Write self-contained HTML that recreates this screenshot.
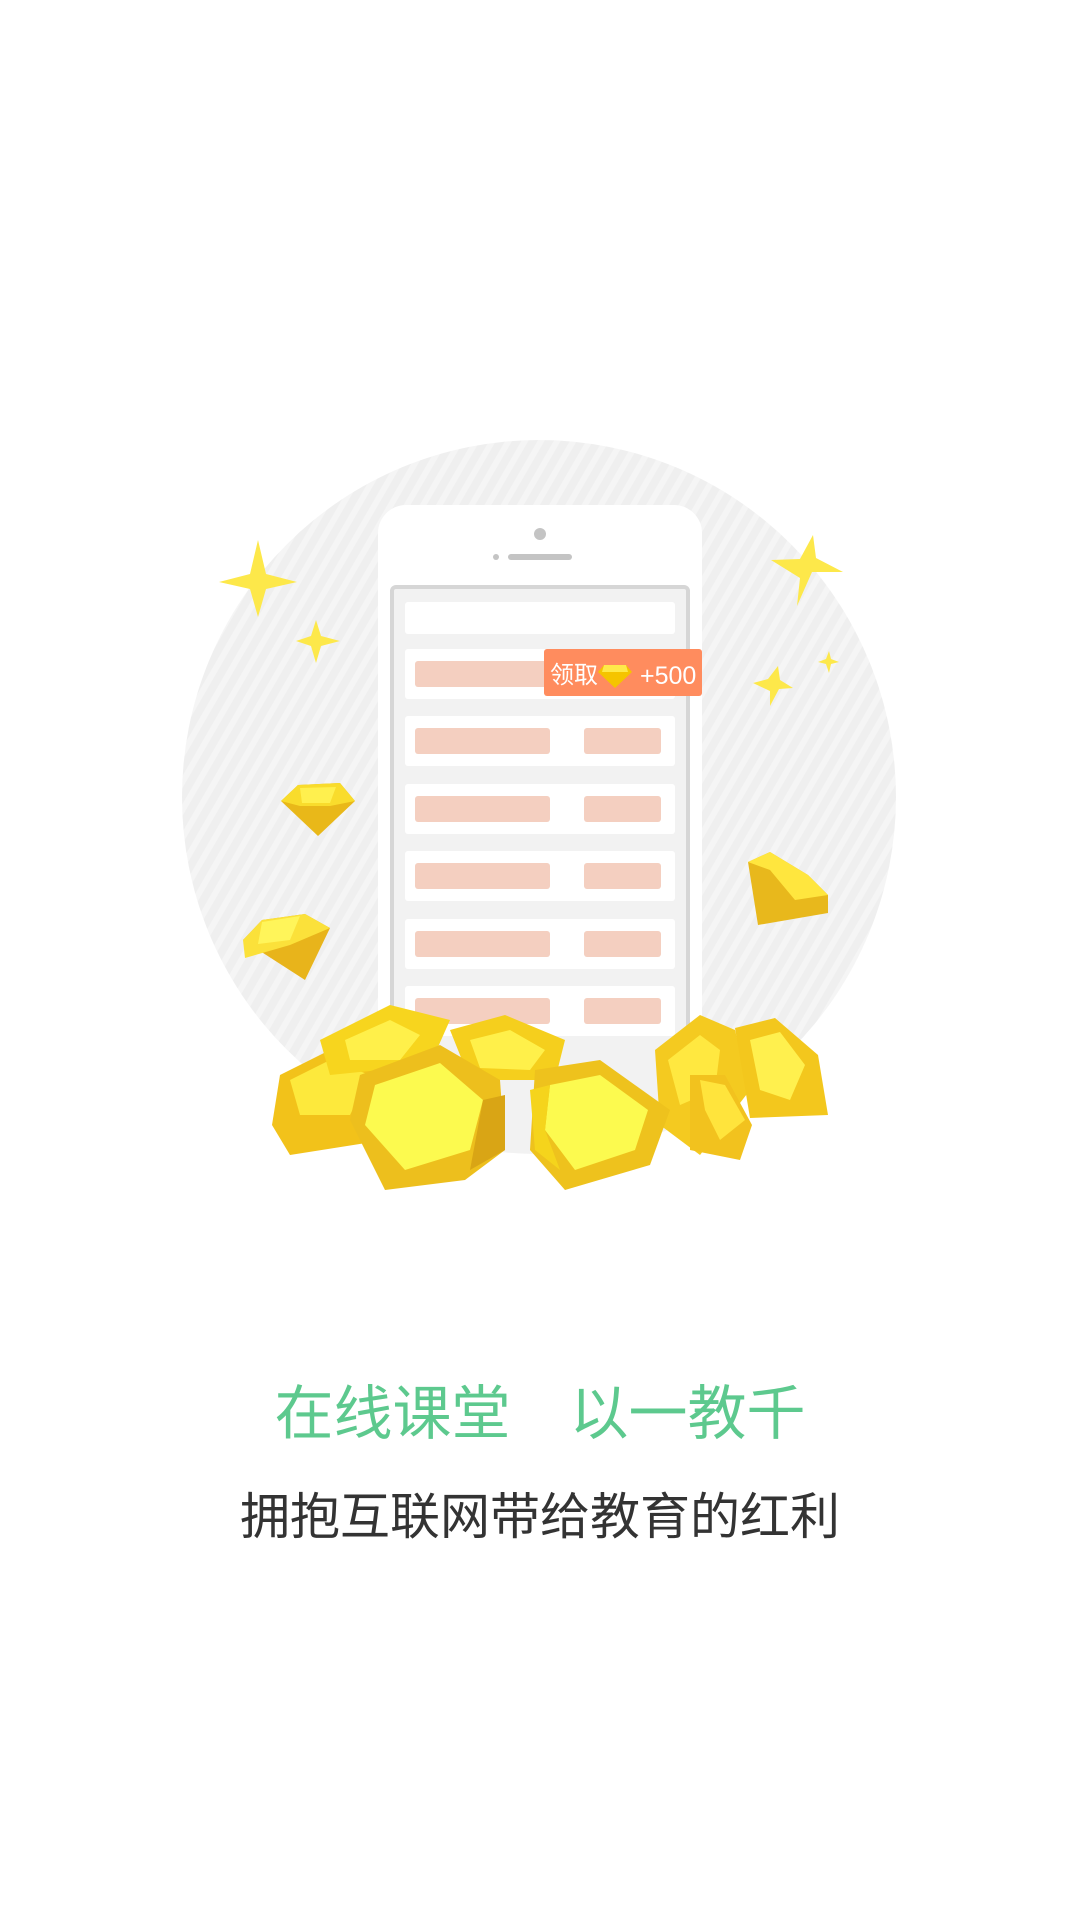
<!DOCTYPE html>
<html><head><meta charset="utf-8"><style>
html,body{margin:0;padding:0;background:#fff;width:1080px;height:1920px;overflow:hidden}
.t{position:absolute;left:0;width:1080px;text-align:center;white-space:pre;font-family:"Liberation Sans","Noto Sans CJK SC",sans-serif}
</style></head><body>
<svg width="1080" height="1920" style="position:absolute;left:0;top:0">
<defs>
<pattern id="st" width="14" height="14" patternUnits="userSpaceOnUse" patternTransform="rotate(30)">
<rect width="14" height="14" fill="#efefef"/><rect width="6" height="14" fill="#f5f5f5"/></pattern>
<clipPath id="cc"><circle cx="539" cy="797" r="357"/></clipPath>
</defs>
<circle cx="539" cy="797" r="357" fill="url(#st)"/>
<g clip-path="url(#cc)">
<rect x="378" y="505" width="324" height="700" rx="28" fill="#fff"/>
<rect x="392" y="587" width="296" height="600" rx="4" fill="#f2f2f2" stroke="#d6d6d6" stroke-width="4"/>
</g>
<circle cx="540" cy="534" r="6" fill="#c4c4c4"/>
<circle cx="496" cy="557" r="3" fill="#c4c4c4"/>
<rect x="508" y="554" width="64" height="6" rx="3" fill="#c4c4c4"/>
<rect x="405" y="602" width="270" height="32" rx="3" fill="#fff"/>
<g fill="#fff">
<rect x="405" y="649" width="270" height="50" rx="3"/>
<rect x="405" y="716" width="270" height="50" rx="3"/>
<rect x="405" y="784" width="270" height="50" rx="3"/>
<rect x="405" y="851" width="270" height="50" rx="3"/>
<rect x="405" y="919" width="270" height="50" rx="3"/>
<rect x="405" y="986" width="270" height="50" rx="3"/>
</g>
<g fill="#f4cfc0">
<rect x="415" y="661" width="150" height="26" rx="3"/>
<rect x="415" y="728" width="135" height="26" rx="3"/><rect x="584" y="728" width="77" height="26" rx="3"/>
<rect x="415" y="796" width="135" height="26" rx="3"/><rect x="584" y="796" width="77" height="26" rx="3"/>
<rect x="415" y="863" width="135" height="26" rx="3"/><rect x="584" y="863" width="77" height="26" rx="3"/>
<rect x="415" y="931" width="135" height="26" rx="3"/><rect x="584" y="931" width="77" height="26" rx="3"/>
<rect x="415" y="998" width="135" height="26" rx="3"/><rect x="584" y="998" width="77" height="26" rx="3"/>
</g>
<rect x="544" y="649" width="158" height="47" rx="3" fill="#ff8c5e"/>
<text x="550" y="683" font-size="24" fill="#fff" font-family="Liberation Sans,Noto Sans CJK SC,sans-serif">领取</text>
<polygon points="604,665 626,665 632,672 615,688 598,672" fill="#f5c400"/>
<polygon points="604,665 626,665 628,672 602,672" fill="#ffe94a"/>
<text x="640" y="684" font-size="25" fill="#fff" font-family="Liberation Sans,sans-serif">+500</text>
<g fill="#fde84a">
<path d="M258 540 L266 574 L297 582 L266 589 L258 617 L250 589 L219 582 L250 574Z"/>
<path d="M316 620 L321 636 L340 641 L321 646 L316 663 L311 646 L296 641 L311 636Z"/>
<path d="M813 535 L816 558 L843 572 L812 572 L797 606 L800 578 L771 560 L800 559Z"/>
<path d="M778 666 L780 680 L793 688 L779 689 L770 706 L770 691 L753 683 L768 679Z"/>
<path d="M829 651 L831 659 L839 662 L831 664 L829 673 L826 664 L818 662 L826 659Z"/>
</g>
<g>
<polygon points="281,801 298,785 340,783 355,801 318,836" fill="#e9b819"/>
<polygon points="281,801 298,785 340,783 355,801 330,806 300,806" fill="#f9dc2c"/>
<polygon points="300,788 336,787 330,803 302,803" fill="#fff04e"/>
<polygon points="243,940 262,920 305,914 330,928 305,980" fill="#e8b41b"/>
<polygon points="243,940 262,920 305,914 330,928 290,945 245,958" fill="#fbe13a"/>
<polygon points="262,922 300,916 290,940 258,944" fill="#fff55a"/>
<polygon points="748,862 770,852 808,875 828,895 828,913 758,925" fill="#e8b81c"/>
<polygon points="748,862 770,852 808,875 828,895 795,900 770,870" fill="#ffe63e"/>
</g>
<g stroke="none">
<polygon points="280,1075 330,1050 380,1060 400,1100 385,1140 290,1155 272,1125" fill="#f2c21a"/>
<polygon points="290,1080 330,1060 370,1075 350,1115 300,1115" fill="#fde93c"/>
<polygon points="320,1040 390,1005 450,1020 430,1065 330,1075" fill="#f7d51e"/>
<polygon points="345,1040 390,1020 420,1035 400,1060 350,1060" fill="#fff04a"/>
<polygon points="450,1030 505,1015 565,1040 555,1080 470,1080" fill="#f5cf1d"/>
<polygon points="470,1040 510,1030 545,1050 530,1070 480,1068" fill="#fff04a"/>
<polygon points="655,1050 700,1015 735,1030 750,1090 700,1155 660,1125" fill="#f4ca20"/>
<polygon points="668,1060 700,1035 720,1050 715,1090 680,1105" fill="#ffe840"/>
<polygon points="735,1028 775,1018 818,1055 828,1115 750,1118" fill="#f3c71d"/>
<polygon points="750,1040 780,1032 805,1065 790,1100 760,1090" fill="#fff04e"/>
<polygon points="690,1075 725,1075 752,1125 740,1160 690,1150" fill="#f2c21e"/>
<polygon points="700,1080 725,1085 745,1120 720,1140 705,1110" fill="#ffe43c"/>
<polygon points="360,1075 440,1045 500,1080 505,1150 465,1180 385,1190 350,1120" fill="#edbf1d"/>
<polygon points="375,1085 440,1063 483,1100 470,1150 405,1170 365,1125" fill="#fcfa4f"/>
<polygon points="483,1100 505,1095 505,1150 470,1170" fill="#d9a515"/>
<polygon points="535,1070 600,1060 670,1110 650,1165 565,1190 530,1150" fill="#eec21d"/>
<polygon points="550,1085 600,1075 648,1110 635,1150 575,1170 545,1130" fill="#fcfa4f"/>
<polygon points="530,1090 550,1085 545,1130 560,1170 535,1150" fill="#f5d41c"/>
</g>
</svg>
<div class="t" style="top:1375px;font-size:59px;color:#5dc98e;line-height:78px">在线课堂　以一教千</div>
<div class="t" style="top:1485px;font-size:50px;color:#333;line-height:64px">拥抱互联网带给教育的红利</div>
</body></html>
